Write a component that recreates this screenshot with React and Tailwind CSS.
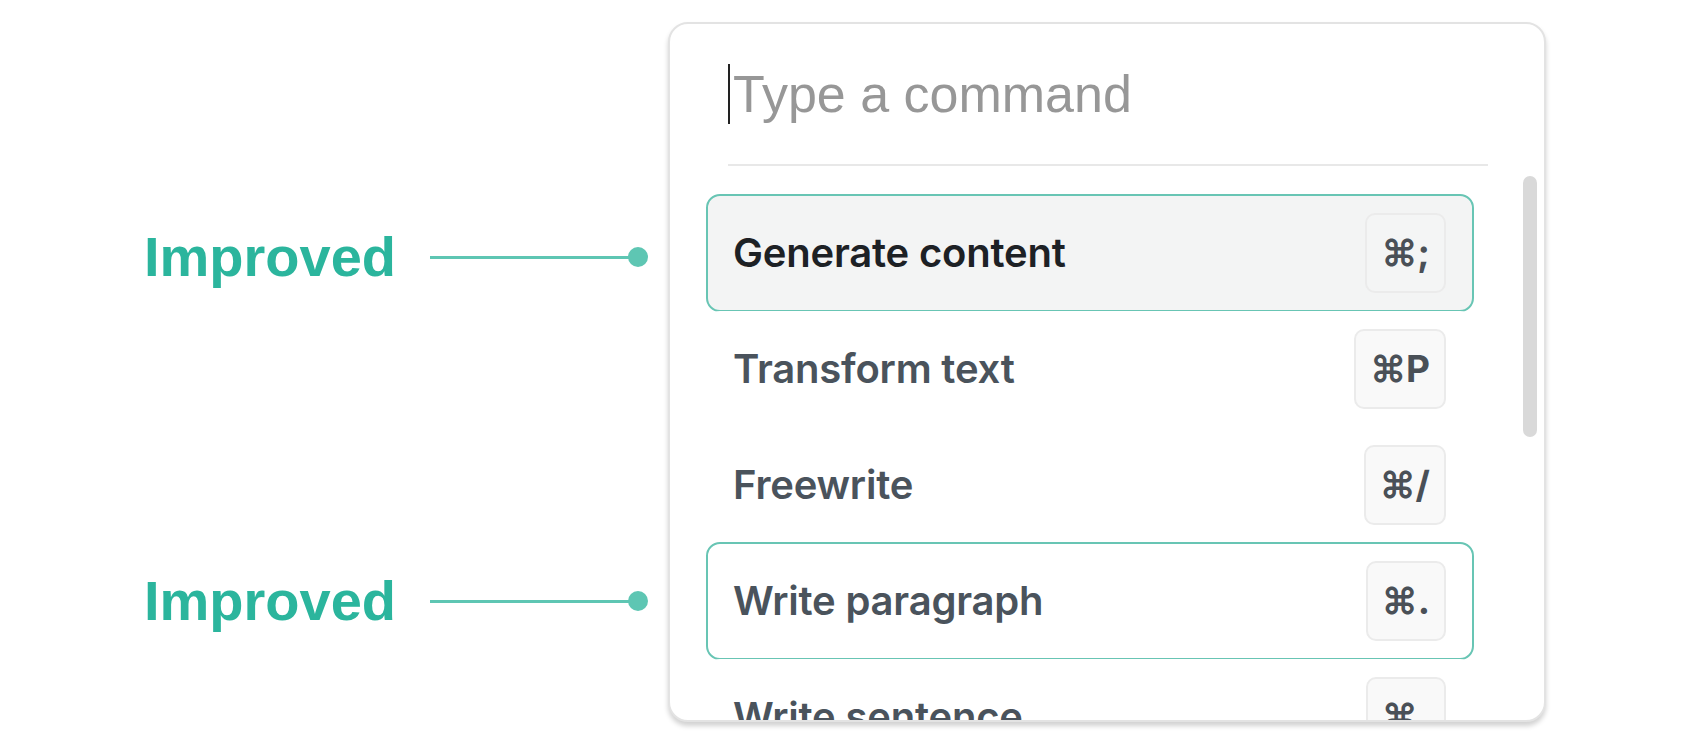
import React from "react";

const commands = [
  { label: "Generate content", keys: "⌘;", active: true, outlined: true },
  { label: "Transform text", keys: "⌘P" },
  { label: "Freewrite", keys: "⌘/" },
  { label: "Write paragraph", keys: "⌘.", outlined: true },
  { label: "Write sentence", keys: "⌘," },
];

function Callout() {
  return (
    <div className="flex items-center h-16">
      <span className="w-[286px] shrink-0 font-['Liberation_Sans',Arial,sans-serif] font-bold text-[56px] leading-none text-[#2bb59d]">
        Improved
      </span>
      <div className="w-[200px] h-[3px] bg-[#5ec6b3]" />
      <div className="w-5 h-5 rounded-full bg-[#5ec6b3] -ml-[2px]" />
    </div>
  );
}

function CommandRow({ item }) {
  return (
    <div
      className={
        "flex items-center justify-between shrink-0 pl-[25px] pr-[26px] rounded-[14px] border-2 " +
        (item.outlined ? "h-[118px] -my-px border-[#68c5b4] " : "h-[116px] border-transparent ") +
        (item.active ? "bg-[#f3f4f4]" : "bg-white")
      }
    >
      <span
        className={
          "text-[40px] font-semibold tracking-[-0.2px] " +
          (item.active ? "text-[#1d2125]" : "text-[#4a535c]")
        }
      >
        {item.label}
      </span>
      <kbd
        className={
          "h-[80px] px-[14px] flex items-center rounded-[10px] border-2 border-[#ebebeb] text-[37px] font-bold text-[#4a5057] font-['Inter',sans-serif] " +
          (item.active ? "bg-[#f4f5f5]" : "bg-[#f9f9f9]")
        }
      >
        {item.keys}
      </kbd>
    </div>
  );
}

export default function App() {
  return (
    <div className="w-full h-[746px] bg-white flex font-['Inter','Noto_Sans',sans-serif] overflow-hidden">
      <div className="w-[668px] shrink-0 pl-[144px] pt-[225px] flex flex-col gap-[280px]">
        <Callout />
        <Callout />
      </div>

      <div className="mt-[22px] w-[878px] h-[700px] shrink-0 rounded-[20px] border-2 border-[#e3e3e3] bg-white shadow-[0_4px_5px_rgba(0,0,0,0.18)] overflow-hidden flex flex-col">
        <div className="h-[140px] shrink-0 flex items-center pl-[58px]">
          <div className="w-[2px] h-[60px] bg-[#222]" />
          <span className="ml-[3px] font-['Liberation_Sans',Arial,sans-serif] text-[52px] text-[#979797] leading-none">
            Type a command
          </span>
        </div>
        <div className="h-[2px] shrink-0 bg-[#e8e8e8] ml-[58px] mr-[56px]" />

        <div className="flex flex-1 min-h-0">
          <div className="w-[768px] shrink-0 ml-[36px] pt-[29px] flex flex-col">
            {commands.map(item => (
              <CommandRow key={item.label} item={item} />
            ))}
          </div>
          <div className="ml-[49px] mt-[10px] w-[14px] h-[261px] rounded-full bg-[#d9d9d9]" />
        </div>
      </div>
    </div>
  );
}
